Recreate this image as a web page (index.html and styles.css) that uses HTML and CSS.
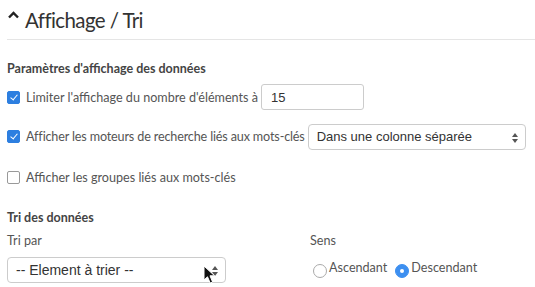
FILE: index.html
```html
<!DOCTYPE html>
<html lang="fr">
<head>
  <meta charset="UTF-8" />
  <title>Affichage / Tri</title>
  <link rel="stylesheet" href="styles.css">
</head>
<body>
  <div class="panel">
    <h2 class="panel-title">
      <svg class="caret" width="11" height="8" viewBox="0 0 11 8"><path d="M1 6.5 L5.5 2 L10 6.5" fill="none" stroke="#222" stroke-width="2.4"/></svg>
      Affichage / Tri
    </h2>

    <h4 class="section">Paramètres d'affichage des données</h4>
    <div class="row row-limit">
      <label class="check"><span class="box on"></span>Limiter l'affichage du nombre d'éléments à</label>
      <input class="field" type="text" value="15">
    </div>
    <div class="row row-engines">
      <label class="check"><span class="box on"></span>Afficher les moteurs de recherche liés aux mots-clés</label>
      <div class="select wide">Dans une colonne séparée<span class="arrows"></span></div>
    </div>
    <div class="row row-groups">
      <label class="check"><span class="box"></span>Afficher les groupes liés aux mots-clés</label>
    </div>

    <h4 class="section section-sort">Tri des données</h4>
    <div class="sort">
      <div class="col col-by">
        <div class="lbl">Tri par</div>
        <div class="select narrow">-- Element à trier --<span class="arrows"></span>
          <svg class="cursor" width="14" height="20" viewBox="0 0 14 20"><path d="M1 1 L1 15 L4.5 11.8 L7.2 18 L9.6 17 L7 10.8 L11.6 10.8 Z" fill="#111" stroke="#fff" stroke-width="1"/></svg>
        </div>
      </div>
      <div class="col col-dir">
        <div class="lbl">Sens</div>
        <div class="radios">
          <label class="radio"><span class="dot"></span>Ascendant</label>
          <label class="radio"><span class="dot on"></span>Descendant</label>
        </div>
      </div>
    </div>
  </div>
</body>
</html>
```
FILE: styles.css
```css
body {
  margin: 0;
  background: #fff;
  font-family: "Lato", "Open Sans", sans-serif;
  color: #555;
  font-size: 12.6px;
}
.panel {
  padding: 0 0 0 7px;
}
.panel-title {
  margin: 0;
  padding: 4px 0 4px 1px;
  font-weight: normal;
  font-size: 20.5px;
  letter-spacing: -0.6px;
  color: #333;
  border-bottom: 1px solid #e5e5e5;
  display: flex;
  align-items: center;
  gap: 6px;
  box-sizing: border-box;
  height: 40px;
}
.caret {
  margin-top: -10px;
}
.section {
  margin: 21px 0 0 0;
  font-size: 12.5px;
  font-weight: bold;
  color: #444;
  height: 18px;
}
.row {
  display: flex;
  align-items: center;
}
.row-limit {
  margin-top: 5px;
  height: 26px;
}
.row-engines {
  margin-top: 13px;
  height: 27px;
}
.row-engines .check {
  letter-spacing: -0.15px;
}
.row-groups {
  margin-top: 17px;
  height: 20px;
}
.check {
  display: flex;
  align-items: center;
  white-space: nowrap;
}
.box {
  width: 11px;
  height: 11px;
  border: 1px solid #999;
  border-radius: 2px;
  margin-right: 6px;
  box-sizing: content-box;
  position: relative;
}
.box.on {
  background: #2d7fe0;
  border-color: #2d7fe0;
}
.box.on::after {
  content: "";
  position: absolute;
  left: 3.5px;
  top: 1px;
  width: 3px;
  height: 6px;
  border: solid #fff;
  border-width: 0 1.8px 1.8px 0;
  transform: rotate(40deg);
}
.field {
  margin-left: 3px;
  width: 103px;
  height: 26px;
  box-sizing: border-box;
  border: 1px solid #ccc;
  border-radius: 3px;
  padding: 0 9px;
  font-family: "Liberation Sans", Arial, sans-serif;
  font-size: 13px;
  color: #333;
}
.select {
  position: relative;
  box-sizing: border-box;
  border: 1px solid #ccc;
  border-radius: 4px;
  height: 26px;
  display: flex;
  align-items: center;
  padding: 0 8px;
  font-family: "Liberation Sans", Arial, sans-serif;
  font-size: 13px;
  color: #333;
}
.wide {
  margin-left: 3px;
  width: 218px;
}
.narrow {
  width: 219px;
  font-size: 14px;
}
.arrows {
  position: absolute;
  right: 7px;
  top: 8px;
  width: 0;
  height: 0;
  border-left: 3px solid transparent;
  border-right: 3px solid transparent;
  border-bottom: 4px solid #555;
}
.arrows::after {
  content: "";
  position: absolute;
  left: -3px;
  top: 6px;
  border-left: 3px solid transparent;
  border-right: 3px solid transparent;
  border-top: 4px solid #555;
}
.cursor {
  position: absolute;
  left: 195px;
  top: 7px;
}
.section-sort {
  margin-top: 23px;
}
.sort {
  display: flex;
  margin-top: 5px;
}
.col-by {
  width: 303px;
}
.lbl {
  height: 18px;
  margin-bottom: 6px;
}
.radios {
  display: flex;
  gap: 8px;
  margin-top: 1px;
  padding-left: 3px;
}
.radio {
  display: flex;
  align-items: center;
}
.dot {
  width: 12px;
  height: 12px;
  border: 1px solid #aaa;
  border-radius: 50%;
  margin-top: 7px;
  margin-right: 2px;
  position: relative;
}
.dot.on {
  background: #3d8ff0;
  border-color: #3d8ff0;
}
.dot.on::after {
  content: "";
  position: absolute;
  left: 4px;
  top: 4px;
  width: 4px;
  height: 4px;
  border-radius: 50%;
  background: #fff;
}
```
